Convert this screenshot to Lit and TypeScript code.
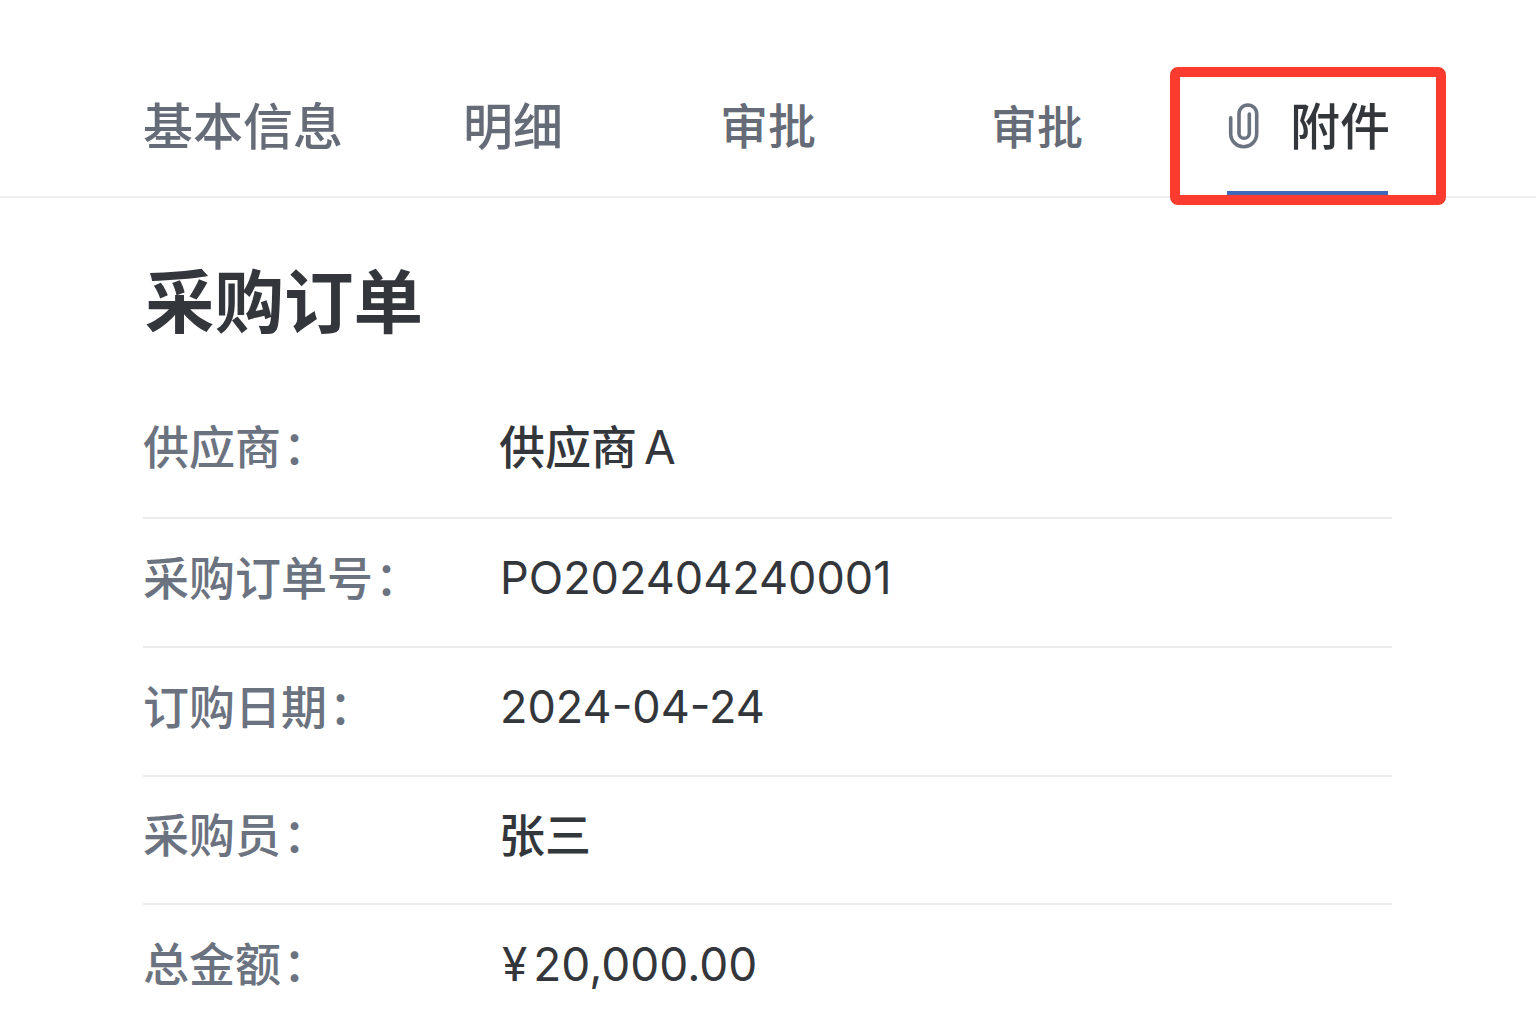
import { LitElement, html, css, svg } from "lit";
import { customElement } from "lit/decorators.js";

@customElement("app-root")
export class AppRoot extends LitElement {
  static styles = css`
    :host {
      display: block;
      width: 1536px;
      height: 1024px;
      overflow: hidden;
      background: #fff;
      position: relative;
      font-family: Inter, "Noto Sans CJK SC", sans-serif;
    }
    .tabs {
      display: grid;
      grid-template-columns: 322px 257px 272px 233px 161px;
      height: 198px;
      box-sizing: border-box;
      padding-left: 143px;
      border-bottom: 2px solid #eeeff1;
      font-size: 50px;
      color: #656c77;
      font-weight: 500;
    }
    .tab {
      padding-top: 93px;
      line-height: 68px;
      white-space: nowrap;
    }
    .tab.second {
      margin-left: -2px;
    }
    .tab.third {
      font-size: 48px;
      margin-left: -2px;
    }
    .tab.fourth {
      font-size: 46px;
      margin-left: -3px;
    }
    .tab.active {
      display: flex;
      align-items: flex-start;
      gap: 31px;
      color: #33363b;
      border-bottom: 5px solid #3f68b8;
      height: 98px;
    }
    .clip {
      width: 32px;
      height: 48px;
      margin-top: 10px;
      flex: none;
    }
    .highlight {
      position: absolute;
      left: 1170px;
      top: 67px;
      width: 276px;
      height: 138px;
      box-sizing: border-box;
      border: 10px solid #fb3b2e;
      border-radius: 8px;
    }
    .content {
      padding: 0 144px 0 143px;
    }
    h1 {
      margin: 0;
      padding: 58px 0 0 2px;
      height: 118px;
      font-size: 69.5px;
      line-height: 95px;
      font-weight: 700;
      color: #33363b;
    }
    .row {
      display: grid;
      grid-template-columns: 357px 1fr;
      align-items: center;
      height: 127px;
      border-bottom: 2px solid #eaebed;
      font-size: 46px;
      line-height: 64px;
      white-space: nowrap;
    }
    .row > * {
      margin-bottom: 10px;
    }
    .row.first {
      height: 143px;
    }
    .row.first > * {
      margin: 2px 0 0;
    }
    .row.short {
      height: 126px;
    }
    .row.last {
      border-bottom: none;
    }
    .label {
      color: #6b7280;
      font-weight: 500;
    }
    .colon {
      margin-left: 2px;
    }
    .value {
      color: #33363b;
    }
    .value.cjk {
      font-weight: 500;
      margin-left: -1px;
    }
    .row.first > .value.cjk {
      margin-left: -1px;
    }
    .value.latin {
      font-size: 45px;
    }
    .a {
      margin-left: 7px;
      font-weight: 400;
    }
    .yen {
      margin: 0 6px 0 2px;
    }
  `;

  private row(label: string, value: unknown, cls = "", valueCls = "") {
    return html`<div class="row ${cls}">
      <div class="label">${label}<span class="colon">：</span></div>
      <div class="value ${valueCls}">${value}</div>
    </div>`;
  }

  render() {
    return html`
      <div class="tabs">
        <div class="tab">基本信息</div>
        <div class="tab second">明细</div>
        <div class="tab third">审批</div>
        <div class="tab fourth">审批</div>
        <div class="tab active">
          <svg class="clip" viewBox="0 0 32 48" fill="none" stroke="#6b7280" stroke-width="3.6" stroke-linecap="round">
            ${svg`<path d="M3.7 14.7 V30.7 A13 13 0 0 0 29.7 30.7 V10.85 A8.85 8.85 0 0 0 12 10.85 V30.15 A5.15 5.15 0 0 0 22.3 30.15 V11"/>`}
          </svg>
          <span>附件</span>
        </div>
      </div>
      <div class="highlight"></div>
      <div class="content">
        <h1>采购订单</h1>
        ${this.row("供应商", html`供应商<span class="a">A</span>`, "first", "cjk")}
        ${this.row("采购订单号", "PO202404240001", "", "latin")}
        ${this.row("订购日期", "2024-04-24", "", "latin")}
        ${this.row("采购员", "张三", "short", "cjk")}
        ${this.row("总金额", html`<span class="yen">¥</span>20,000.00`, "last")}
      </div>
    `;
  }
}
